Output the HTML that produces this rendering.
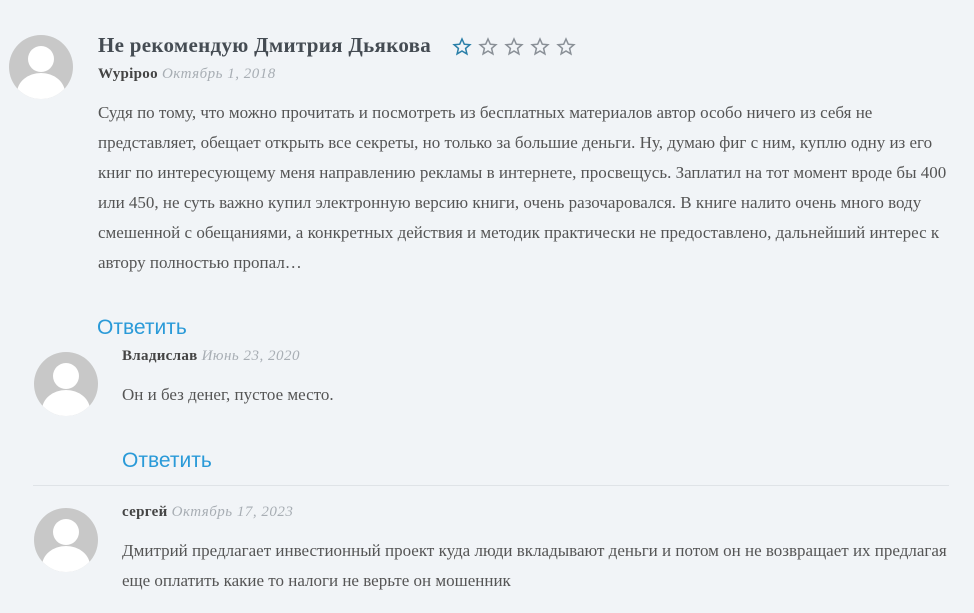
<!DOCTYPE html>
<html><head><meta charset="utf-8"><style>
body{margin:0;width:974px;height:613px;background:#f1f4f7;position:relative;overflow:hidden;font-family:"Liberation Serif",serif;color:#555}
.a{position:absolute;white-space:nowrap}
.av{position:absolute;width:64px;height:64px;border-radius:50%;background:#c8c8c8;overflow:hidden}
.av:before{content:"";position:absolute;left:19px;top:11px;width:26px;height:26px;border-radius:50%;background:#fff}
.av:after{content:"";position:absolute;left:8px;top:38px;width:48px;height:40px;border-radius:50%;background:#fff}
.t{font-size:17px;line-height:30px;color:#555;letter-spacing:0px}
.m{font-size:15px;font-weight:bold;color:#444;letter-spacing:0.3px}
.m i{font-weight:normal;color:#a8aeb4;letter-spacing:0.5px}
.r{font-family:"Liberation Sans",sans-serif;font-size:21px;color:#2a9ad8}
</style></head><body>
<div class="av" style="left:9px;top:35px"></div>
<div class="a" style="left:98px;top:33px;font-size:21px;font-weight:bold;color:#454c53;letter-spacing:0.3px">Не рекомендую Дмитрия Дьякова</div>
<svg class="a" style="left:452px;top:37px" width="130" height="20" viewBox="0 0 130 20">
<g fill="none" stroke-width="1.5">
<path stroke="#2a7fa8" d="M10 2l2.3 5.2 5.6.5-4.3 3.7 1.3 5.5L10 14l-4.9 2.9 1.3-5.5L2.1 7.7l5.6-.5z"/>
<path stroke="#8a9097" transform="translate(26 0)" d="M10 2l2.3 5.2 5.6.5-4.3 3.7 1.3 5.5L10 14l-4.9 2.9 1.3-5.5L2.1 7.7l5.6-.5z"/>
<path stroke="#8a9097" transform="translate(52 0)" d="M10 2l2.3 5.2 5.6.5-4.3 3.7 1.3 5.5L10 14l-4.9 2.9 1.3-5.5L2.1 7.7l5.6-.5z"/>
<path stroke="#8a9097" transform="translate(78 0)" d="M10 2l2.3 5.2 5.6.5-4.3 3.7 1.3 5.5L10 14l-4.9 2.9 1.3-5.5L2.1 7.7l5.6-.5z"/>
<path stroke="#8a9097" transform="translate(104 0)" d="M10 2l2.3 5.2 5.6.5-4.3 3.7 1.3 5.5L10 14l-4.9 2.9 1.3-5.5L2.1 7.7l5.6-.5z"/>
</g></svg>
<div class="a m" style="left:98px;top:66px">Wypipoo <i>Октябрь 1, 2018</i></div>
<div class="a t" style="left:98px;top:98px">Судя по тому, что можно прочитать и посмотреть из бесплатных материалов автор особо ничего из себя не<br>представляет, обещает открыть все секреты, но только за большие деньги. Ну, думаю фиг с ним, куплю одну из его<br>книг по интересующему меня направлению рекламы в интернете, просвещусь. Заплатил на тот момент вроде бы 400<br>или 450, не суть важно купил электронную версию книги, очень разочаровался. В книге налито очень много воду<br>смешенной с обещаниями, а конкретных действия и методик практически не предоставлено, дальнейший интерес к<br>автору полностью пропал…</div>
<div class="a r" style="left:97px;top:316px">Ответить</div>
<div class="av" style="left:34px;top:352px"></div>
<div class="a m" style="left:122px;top:348px">Владислав <i>Июнь 23, 2020</i></div>
<div class="a t" style="left:122px;top:380px">Он и без денег, пустое место.</div>
<div class="a r" style="left:122px;top:449px">Ответить</div>
<div class="a" style="left:33px;top:485px;width:916px;height:1px;background:#dfe3e7"></div>
<div class="av" style="left:34px;top:508px"></div>
<div class="a m" style="left:122px;top:504px">сергей <i>Октябрь 17, 2023</i></div>
<div class="a t" style="left:122px;top:536px">Дмитрий предлагает инвестионный проект куда люди вкладывают деньги и потом он не возвращает их предлагая<br>еще оплатить какие то налоги не верьте он мошенник</div>
</body></html>
